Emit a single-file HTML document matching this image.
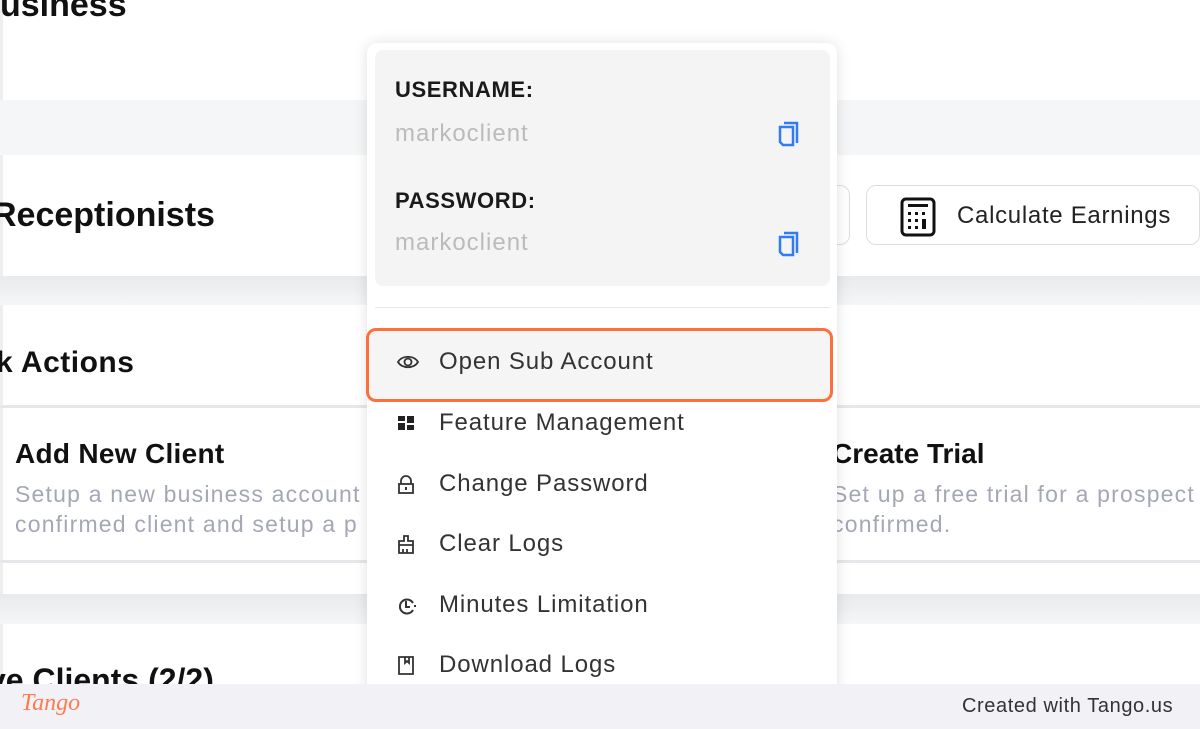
<!DOCTYPE html>
<html><head><style>
*{margin:0;padding:0;box-sizing:border-box}
body{width:1200px;height:729px;overflow:hidden;background:#fff;font-family:"Liberation Sans",sans-serif;position:relative;color:#111}
.abs{position:absolute}
.band{position:absolute;left:0;width:1200px;background:#f3f4f6}
.t{position:absolute;white-space:nowrap}
.item{position:absolute;left:396px;font-size:24px;color:#333;white-space:nowrap;letter-spacing:0.9px}
.item svg{position:absolute;left:0;top:4px}
.item span{position:absolute;left:43px;top:0}
</style></head><body>
<div class="abs" style="left:0;top:0;width:3px;height:684px;background:#eee"></div>
<div class="t" style="left:0;top:-14px;font-size:34px;font-weight:bold">usiness</div>
<div class="band" style="top:100px;height:55px;background:#f5f6f7"></div>
<div class="t" style="left:-8px;top:196px;font-size:34px;font-weight:bold">Receptionists</div>
<div class="band" style="top:276px;height:29px;background:linear-gradient(#e9eaeb,#f5f6f7)"></div>
<div class="t" style="left:-4px;top:346px;font-size:30px;font-weight:bold;letter-spacing:0.5px">k Actions</div>
<div class="abs" style="left:0;top:405px;width:1200px;height:3px;background:#e6e7ea"></div>
<div class="t" style="left:15px;top:438px;font-size:28px;font-weight:bold;letter-spacing:0.3px">Add New Client</div>
<div class="t" style="left:15px;top:479px;font-size:23px;color:#a4a8b4;line-height:30px;letter-spacing:1.2px">Setup a new business account<br>confirmed client and setup a p</div>
<div class="t" style="left:832px;top:438px;font-size:28px;font-weight:bold">Create Trial</div>
<div class="t" style="left:832px;top:479px;font-size:23px;color:#a4a8b4;line-height:30px;letter-spacing:1.2px">Set up a free trial for a prospect<br>confirmed.</div>
<div class="abs" style="left:0;top:560px;width:1200px;height:3px;background:#e6e7ea"></div>
<div class="band" style="top:594px;height:30px;background:linear-gradient(#e9eaeb,#f5f6f7)"></div>
<div class="t" style="left:-12px;top:662px;font-size:32px;font-weight:bold">ve Clients (2/2)</div>
<div class="abs" style="left:780px;top:185px;width:70px;height:60px;border:1px solid #ddd;border-radius:10px"></div>
<div class="abs" style="left:866px;top:185px;width:334px;height:60px;border:1px solid #ddd;border-radius:10px;background:#fff"></div>
<svg class="abs" style="left:900px;top:197px" width="36" height="40" viewBox="0 0 36 40"><rect x="2" y="2" width="32" height="36" rx="4" fill="none" stroke="#111" stroke-width="3"/><rect x="8" y="7" width="20" height="3" fill="#111"/><g fill="#111"><rect x="8" y="15" width="3" height="3"/><rect x="15" y="15" width="3" height="3"/><rect x="22" y="15" width="3" height="3"/><rect x="8" y="22" width="3" height="3"/><rect x="15" y="22" width="3" height="3"/><rect x="8" y="29" width="3" height="3"/><rect x="15" y="29" width="3" height="3"/><rect x="22" y="22" width="4" height="10"/></g></svg>
<div class="t" style="left:957px;top:202px;font-size:24px;color:#222;letter-spacing:0.7px">Calculate Earnings</div>

<div class="abs" style="left:367px;top:43px;width:470px;height:660px;background:#fff;border-radius:10px;box-shadow:0 0 14px rgba(0,0,0,.12)"></div>
<div class="abs" style="left:375px;top:50px;width:455px;height:236px;background:#f4f4f4;border-radius:8px"></div>
<div class="t" style="left:395px;top:77px;font-size:22px;font-weight:bold;color:#1a1a1a;letter-spacing:0.6px">USERNAME:</div>
<div class="t" style="left:395px;top:120px;font-size:24px;color:#bbb;letter-spacing:1px">markoclient</div>
<div class="t" style="left:395px;top:188px;font-size:22px;font-weight:bold;color:#1a1a1a;letter-spacing:0.6px">PASSWORD:</div>
<div class="t" style="left:395px;top:229px;font-size:24px;color:#bbb;letter-spacing:1px">markoclient</div>
<svg class="abs" style="left:777px;top:120px" width="24" height="28" viewBox="0 0 24 28"><path d="M7 3h13v20" fill="none" stroke="#2f7cf6" stroke-width="2.5"/><path d="M3 7h13v18H6l-3-3z" fill="none" stroke="#2f7cf6" stroke-width="2.5"/></svg>
<svg class="abs" style="left:777px;top:230px" width="24" height="28" viewBox="0 0 24 28"><path d="M7 3h13v20" fill="none" stroke="#2f7cf6" stroke-width="2.5"/><path d="M3 7h13v18H6l-3-3z" fill="none" stroke="#2f7cf6" stroke-width="2.5"/></svg>
<div class="abs" style="left:375px;top:307px;width:455px;height:1px;background:#e6e6e6"></div>
<div class="abs" style="left:366px;top:328px;width:467px;height:74px;border:3px solid #ff6f3c;border-radius:10px;background:#f5f5f5"></div>
<div class="item" style="top:348px"><svg width="24" height="20" viewBox="0 0 24 20"><path d="M2 10C6 3 18 3 22 10C18 17 6 17 2 10Z" fill="none" stroke="#333" stroke-width="1.8"/><circle cx="12" cy="10" r="3.5" fill="none" stroke="#333" stroke-width="1.8"/></svg><span>Open Sub Account</span></div>
<div class="item" style="top:409px"><svg width="20" height="20" viewBox="0 0 20 20"><g fill="#222"><rect x="2" y="3" width="7" height="5"/><rect x="11" y="3" width="7" height="7"/><rect x="2" y="10" width="7" height="7"/><rect x="11" y="12" width="7" height="5"/></g></svg><span>Feature Management</span></div>
<div class="item" style="top:470px"><svg width="20" height="22" viewBox="0 0 20 22"><path d="M5 10V7a5 5 0 0 1 10 0v3" fill="none" stroke="#333" stroke-width="1.8"/><rect x="3" y="10" width="14" height="9" fill="none" stroke="#333" stroke-width="1.8"/><rect x="9" y="13" width="2" height="3" fill="#333"/></svg><span>Change Password</span></div>
<div class="item" style="top:530px"><svg width="20" height="22" viewBox="0 0 20 22"><path d="M8 2h4v5h5v4H3V7h5z M3 11v8h14v-8 M7 15v4 M11 15v4" fill="none" stroke="#333" stroke-width="1.8"/></svg><span>Clear Logs</span></div>
<div class="item" style="top:591px"><svg width="22" height="22" viewBox="0 0 22 22"><path d="M17 8A7 7 0 1 0 17 15" fill="none" stroke="#333" stroke-width="2"/><path d="M10 6v6h4 M18 11h2" fill="none" stroke="#333" stroke-width="2"/></svg><span>Minutes Limitation</span></div>
<div class="item" style="top:651px"><svg width="20" height="22" viewBox="0 0 20 22"><path d="M3 2h14v17H3z M9 2v6l2-2 2 2V2" fill="none" stroke="#333" stroke-width="1.8"/></svg><span>Download Logs</span></div>

<div class="abs" style="left:0;top:684px;width:1200px;height:45px;background:#f2f1f6"></div>
<div class="t" style="left:21px;top:690px;font-size:24px;font-style:italic;color:#ff7a50;font-family:'Liberation Serif',serif">Tango</div>
<div class="t" style="left:962px;top:695px;font-size:20px;color:#333;letter-spacing:0.6px">Created with Tango.us</div>
</body></html>
